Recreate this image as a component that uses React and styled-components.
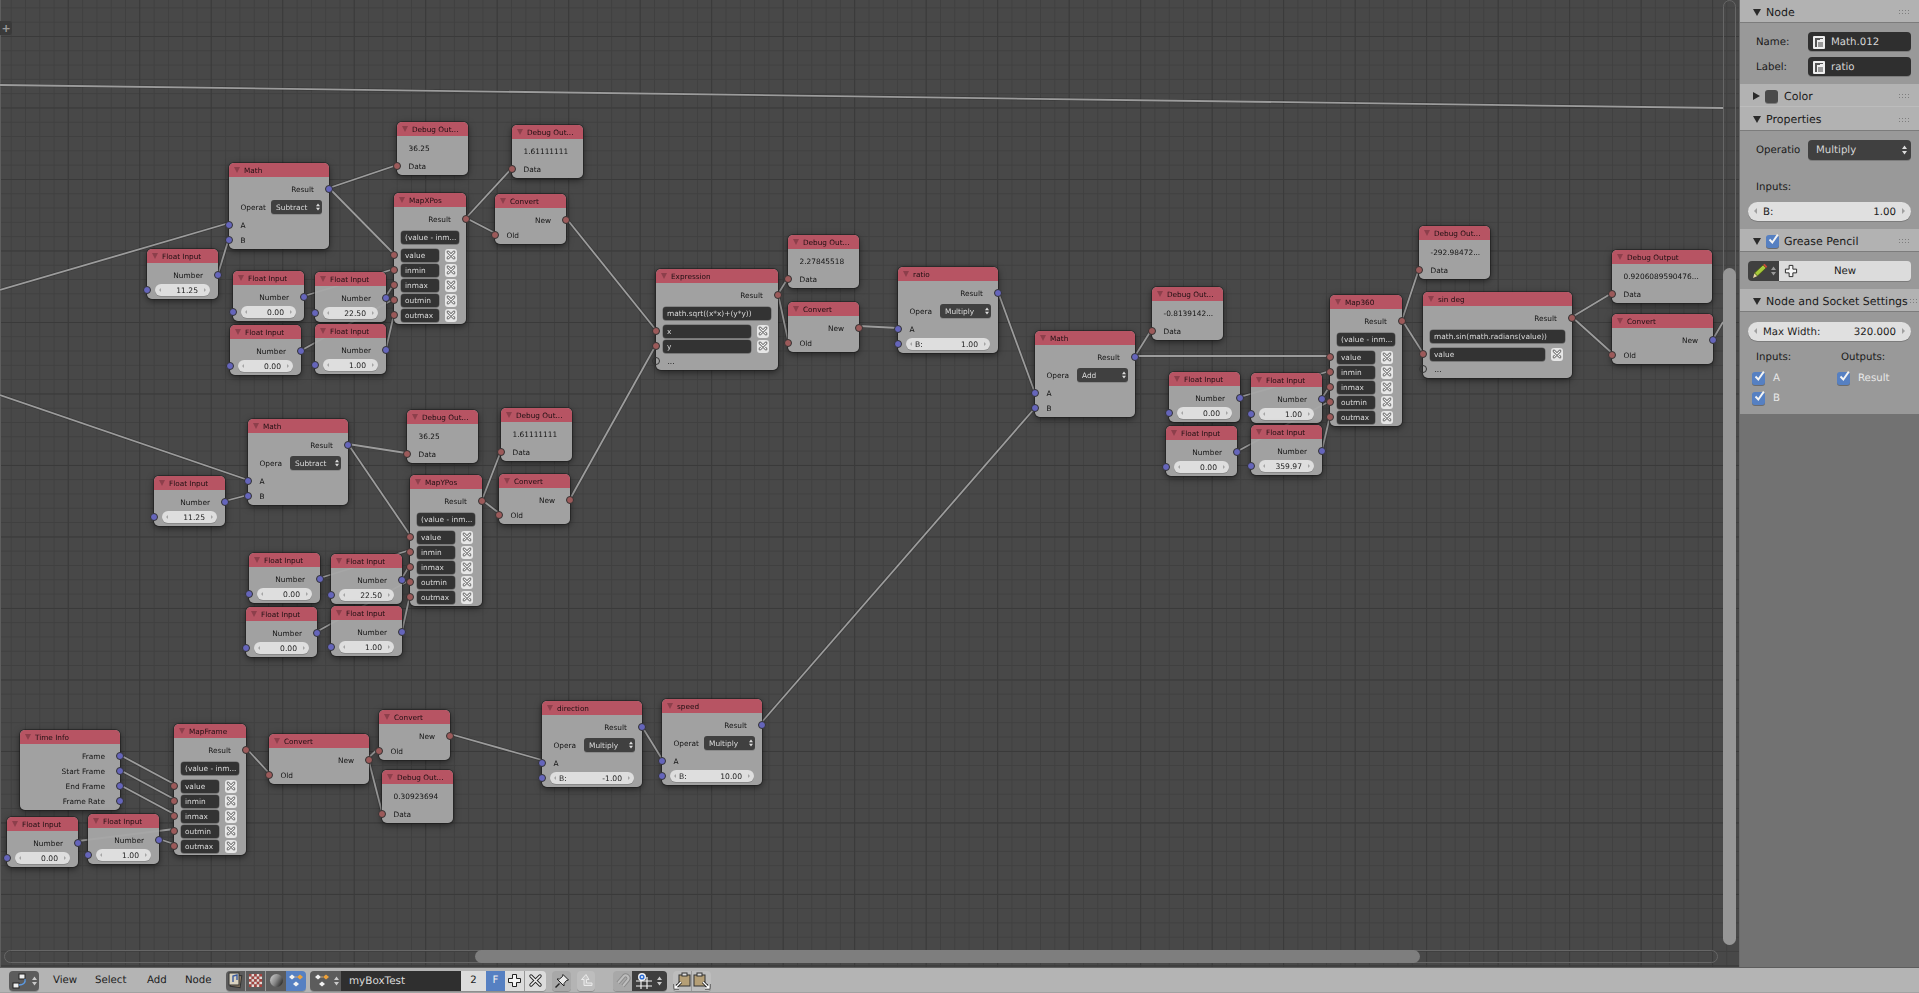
import styled, { createGlobalStyle } from "styled-components";

const GlobalStyle = createGlobalStyle`
  html, body {
    margin: 0;
    padding: 0;
    background: #727272;
    overflow: hidden;
  }
  * {
    box-sizing: border-box;
  }
`;

const WIRES = [
  [0, 85, 1723, 108],
  [0, 290, 229, 223],
  [0, 395, 248, 480],
  // first map group
  [229, 238, 218, 274],
  [329, 188, 397, 165],
  [329, 188, 394, 254],
  [304, 296, 394, 269],
  [386, 296, 394, 284],
  [302, 350, 394, 299],
  [386, 349, 394, 314],
  [466, 218, 512, 168],
  [466, 218, 495, 233],
  [566, 218, 656, 330],
  // second map group
  [225, 501, 248, 495],
  [348, 444, 406, 453],
  [348, 444, 410, 535],
  [320, 578, 410, 550],
  [402, 578, 410, 565],
  [318, 631, 410, 580],
  [402, 631, 410, 595],
  [482, 500, 501, 451],
  [482, 500, 499, 513],
  [570, 499, 656, 345],
  // middle
  [778, 294, 788, 278],
  [778, 294, 788, 340],
  [859, 326, 898, 328],
  [998, 292, 1035, 393],
  [1135, 356, 1152, 329],
  [1135, 356, 1330, 356],
  [1240, 397, 1330, 371],
  [1322, 398, 1330, 386],
  [1238, 451, 1330, 401],
  [1322, 450, 1330, 416],
  [761, 723, 1035, 408],
  [1402, 320, 1419, 269],
  [1402, 320, 1423, 353],
  [1572, 317, 1612, 293],
  [1572, 317, 1612, 353],
  [1713, 339, 1723, 322],
  // time group
  [120, 755, 174, 784],
  [120, 770, 174, 799],
  [120, 785, 174, 814],
  [78, 841, 174, 829],
  [159, 839, 174, 844],
  [246, 748, 269, 773],
  [368, 758, 379, 748],
  [368, 758, 382, 812],
  [450, 734, 542, 760],
  [641, 725, 662, 759],
];

const MAP_INPUTS = ["value", "inmin", "inmax", "outmin", "outmax"];

const NODES = [
  { type: "debug", x: 397, y: 122, value: "36.25" },
  { type: "debug", x: 512, y: 125, value: "1.61111111" },
  { type: "math", x: 229, y: 163, title: "Math", label: "Operat", op: "Subtract" },
  { type: "map", x: 394, y: 193, title: "MapXPos" },
  { type: "convert", x: 495, y: 194 },
  { type: "float", x: 147, y: 249, value: "11.25" },
  { type: "float", x: 233, y: 271, value: "0.00" },
  { type: "float", x: 315, y: 272, value: "22.50" },
  { type: "float", x: 230, y: 325, value: "0.00" },
  { type: "float", x: 315, y: 324, value: "1.00" },

  { type: "math", x: 248, y: 419, title: "Math", label: "Opera", op: "Subtract" },
  { type: "debug", x: 407, y: 410, value: "36.25" },
  { type: "debug", x: 501, y: 408, value: "1.61111111" },
  { type: "map", x: 410, y: 475, title: "MapYPos" },
  { type: "convert", x: 499, y: 474 },
  { type: "float", x: 154, y: 476, value: "11.25" },
  { type: "float", x: 249, y: 553, value: "0.00" },
  { type: "float", x: 331, y: 554, value: "22.50" },
  { type: "float", x: 246, y: 607, value: "0.00" },
  { type: "float", x: 331, y: 606, value: "1.00" },

  { type: "time", x: 20, y: 730 },
  { type: "map", x: 174, y: 724, title: "MapFrame" },
  { type: "convert", x: 269, y: 734, w: 100 },
  { type: "convert", x: 379, y: 710 },
  { type: "debug", x: 382, y: 770, value: "0.30923694" },
  { type: "float", x: 7, y: 817, value: "0.00" },
  { type: "float", x: 88, y: 814, value: "1.00" },
  { type: "math", x: 542, y: 701, title: "direction", label: "Opera", op: "Multiply", b: "-1.00" },
  { type: "math", x: 662, y: 699, title: "speed", label: "Operat", op: "Multiply", b: "10.00" },

  { type: "expr", x: 656, y: 269, w: 122, title: "Expression", expr: "math.sqrt((x*x)+(y*y))", inputs: ["x", "y"] },
  { type: "debug", x: 788, y: 235, value: "2.27845518" },
  { type: "convert", x: 788, y: 302 },
  { type: "math", x: 898, y: 267, title: "ratio", label: "Opera", op: "Multiply", b: "1.00" },
  { type: "math", x: 1035, y: 331, title: "Math", label: "Opera", op: "Add" },
  { type: "debug", x: 1152, y: 287, value: "-0.8139142..." },
  { type: "float", x: 1169, y: 372, value: "0.00" },
  { type: "float", x: 1251, y: 373, value: "1.00" },
  { type: "float", x: 1166, y: 426, value: "0.00" },
  { type: "float", x: 1251, y: 425, value: "359.97" },

  { type: "debug", x: 1419, y: 226, value: "-292.98472..." },
  { type: "map", x: 1330, y: 295, title: "Map360" },
  { type: "expr", x: 1423, y: 292, w: 149, title: "sin deg", expr: "math.sin(math.radians(value))", inputs: ["value"] },
  { type: "debug", x: 1612, y: 250, w: 100, title: "Debug Output", value: "0.9206089590476..." },
  { type: "convert", x: 1612, y: 314, w: 101 },
];

const Page = styled.div`
  display: flex;
  flex-direction: column;
  width: 1919px;
  height: 993px;
  font-family: "DejaVu Sans", sans-serif;
  text-rendering: geometricPrecision;
`;

const Main = styled.div`
  display: flex;
  height: 967px;
`;

const Canvas = styled.div`
  position: relative;
  width: 1740px;
  height: 967px;
  overflow: hidden;
  background-color: #484848;
  box-shadow: inset 1px 0 #5e5e5e, inset -1px 0 #6a6a6a;
  background-image:
    linear-gradient(to right, #3a3a3a 1px, transparent 1px),
    linear-gradient(to bottom, #3a3a3a 1px, transparent 1px),
    linear-gradient(to right, #404040 1px, transparent 1px),
    linear-gradient(to bottom, #404040 1px, transparent 1px);
  background-size: 71.5px 71.5px, 71.5px 71.5px, 14.3px 14.3px, 14.3px 14.3px;
  background-position: 67.7px 0, 0 36px, 10.7px 0, 0 7.4px;
`;

const WireLayer = styled.svg`
  position: absolute;
  inset: 0;
  filter: blur(0.3px);
`;

const AddTab = styled.div`
  position: absolute;
  left: 0;
  top: 21px;
  width: 12px;
  height: 14px;
  display: flex;
  align-items: center;
  justify-content: center;
  background: #3a3a3a;
  border-radius: 0 3px 3px 0;
  color: #9a9a9a;
  font-size: 11px;
  font-weight: bold;
`;

const ScrollTrackX = styled.div`
  position: absolute;
  left: 4px;
  top: 950px;
  width: 1714px;
  height: 13px;
  border: 1px solid #666;
  border-radius: 7px;
`;

const ScrollThumbX = styled.div`
  position: absolute;
  left: 475px;
  top: 950px;
  width: 945px;
  height: 13px;
  background: #7e7e7e;
  border-radius: 7px;
`;

const ScrollTrackY = styled.div`
  position: absolute;
  left: 1723px;
  top: 0;
  width: 13px;
  height: 945px;
  border: 1px solid #666;
  border-radius: 7px;
`;

const ScrollThumbY = styled.div`
  position: absolute;
  left: 1723px;
  top: 268px;
  width: 13px;
  height: 677px;
  background: #969696;
  border-radius: 7px;
`;

/* nodes */

const NodeBox = styled.div`
  position: absolute;
  left: ${(p) => p.$x}px;
  top: ${(p) => p.$y}px;
  width: ${(p) => p.$w}px;
  display: flex;
  flex-direction: column;
  padding-bottom: 1.5px;
  background: rgba(166, 166, 166, 0.95);
  border-radius: 5px;
  box-shadow: 0 0 0 1px rgba(28, 28, 28, 0.55), 0 2px 7px rgba(0, 0, 0, 0.55);
  font-size: 7.4px;
  color: #141414;
  filter: blur(0.35px);
`;

const NodeHeader = styled.div`
  display: flex;
  align-items: center;
  gap: 4px;
  height: 14px;
  padding-left: 5px;
  margin-bottom: 4.5px;
  background: rgba(184, 80, 96, 0.95);
  border-radius: 5px 5px 0 0;
  color: #1f0f12;
  font-size: 7.3px;
  white-space: nowrap;
`;

const HeaderArrow = styled.span`
  width: 0;
  height: 0;
  border-left: 3px solid transparent;
  border-right: 3px solid transparent;
  border-top: 6px solid #8d3f4b;
`;

const Row = styled.div`
  position: relative;
  display: flex;
  align-items: center;
  height: 15px;
  margin-top: ${(p) => (p.$spaced ? 3 : 0)}px;
  padding: 0 ${(p) => (p.$right ? 15 : 7)}px 0 ${(p) => (p.$text ? 11.5 : 7)}px;
  justify-content: ${(p) => (p.$right ? "flex-end" : "flex-start")};
  white-space: nowrap;
`;

const Socket = styled.span`
  position: absolute;
  top: 50%;
  ${(p) => (p.$side === "out" ? "right: -4px" : "left: -4px")};
  width: 8px;
  height: 8px;
  margin-top: -4px;
  border-radius: 50%;
  border: 1px solid #333;
  background: ${(p) =>
    p.$kind === "float" ? "#6565bb" : p.$kind === "any" ? "#9c5a5a" : "transparent"};
`;

const FloatField = styled.div`
  position: relative;
  flex: 1;
  display: flex;
  justify-content: space-between;
  align-items: center;
  height: 12px;
  padding: 0 12px 0 9px;
  margin: 0 1px;
  background: #dedede;
  border-radius: 6px;
  box-shadow: 0 1px 0 #8a8a8a;
  color: #1c1c1c;
  font-size: 7.6px;

  &:before,
  &:after {
    content: "";
    position: absolute;
    top: 4px;
    border-top: 2px solid transparent;
    border-bottom: 2px solid transparent;
  }
  &:before {
    left: 4px;
    border-right: 2px solid #a5a5a5;
  }
  &:after {
    right: 4px;
    border-left: 2px solid #a5a5a5;
  }
`;

const ValueSpacer = styled.span`
  flex: 1;
`;

const Dropdown = styled.div`
  position: relative;
  display: flex;
  align-items: center;
  width: 51px;
  height: 14px;
  padding-left: 5px;
  margin-left: auto;
  background: #404040;
  border-radius: 3px;
  box-shadow: 0 1px 0 #8a8a8a;
  color: #dcdcdc;
  font-size: 7.4px;
`;

const UpDown = styled.svg`
  position: absolute;
  right: ${(p) => p.$r ?? 2}px;
  top: 50%;
  transform: translateY(-50%);
`;

const DarkField = styled.div`
  flex: 1;
  display: flex;
  align-items: center;
  height: 13px;
  padding-left: 4px;
  min-width: 0;
  overflow: hidden;
  background: #333;
  border-radius: 3px;
  box-shadow: 0 0 0 0.5px #666, 0 1px 0 #8a8a8a;
  color: #dadada;
  font-size: 7.4px;
  white-space: nowrap;
`;

const LinkButton = styled.div`
  display: flex;
  align-items: center;
  justify-content: center;
  flex-shrink: 0;
  width: 12px;
  height: 13px;
  margin-left: 6px;
  margin-right: 2px;
  background: #e6e6e6;
  border-radius: 3px;
`;

function UnlinkIcon() {
  return (
    <svg width="10" height="10" viewBox="0 0 10 10" fill="none" strokeLinecap="round">
      <path d="M2 2 8 8M8 2 2 8" stroke="#444" strokeWidth="2.6" />
      <path d="M2 2 8 8M8 2 2 8" stroke="#f2f2f2" strokeWidth="1.3" />
    </svg>
  );
}

function Arrows({ color = "#dcdcdc", right = 2, size = 8, width = 4 }) {
  return (
    <UpDown $r={right} width={width} height={size} viewBox="0 0 5 9" fill={color}>
      <path d="M2.5 0 5 3.6H0zM2.5 9 0 5.4h5z" />
    </UpDown>
  );
}

function Node({ x, y, w = 71, title, children }) {
  return (
    <NodeBox $x={x} $y={y} $w={w}>
      <NodeHeader>
        <HeaderArrow />
        {title}
      </NodeHeader>
      {children}
    </NodeBox>
  );
}

function MathBody({ label, op, b }) {
  return (
    <>
      <Row $right>
        Result
        <Socket $side="out" $kind="float" />
      </Row>
      <Row $spaced $text>
        {label}
        <Dropdown>
          {op}
          <Arrows />
        </Dropdown>
      </Row>
      <Row $spaced $text>
        <Socket $kind="float" />A
      </Row>
      {b ? (
        <Row>
          <Socket $kind="float" />
          <FloatField>
            B:
            <span>{b}</span>
          </FloatField>
        </Row>
      ) : (
        <Row $text>
          <Socket $kind="float" />B
        </Row>
      )}
    </>
  );
}

function NodeView({ node }) {
  const { type, x, y, w, title, value } = node;
  if (type === "float") {
    return (
      <Node x={x} y={y} title="Float Input">
        <Row $right>
          Number
          <Socket $side="out" $kind="float" />
        </Row>
        <Row>
          <Socket $kind="float" />
          <FloatField>
            <ValueSpacer />
            {value}
          </FloatField>
        </Row>
      </Node>
    );
  }
  if (type === "debug") {
    return (
      <Node x={x} y={y} w={w} title={title || "Debug Out..."}>
        <Row $text>{value}</Row>
        <Row $spaced $text>
          <Socket $kind="any" />
          Data
        </Row>
      </Node>
    );
  }
  if (type === "convert") {
    return (
      <Node x={x} y={y} w={w} title="Convert">
        <Row $right>
          New
          <Socket $side="out" $kind={w === 101 ? "float" : "any"} />
        </Row>
        <Row $text>
          <Socket $kind="any" />
          Old
        </Row>
      </Node>
    );
  }
  if (type === "math") {
    return (
      <Node x={x} y={y} w={100} title={title}>
        <MathBody label={node.label} op={node.op} b={node.b} />
      </Node>
    );
  }
  if (type === "map") {
    return (
      <Node x={x} y={y} w={72} title={title}>
        <Row $right>
          Result
          <Socket $side="out" $kind="any" />
        </Row>
        <Row $spaced>
          <DarkField>(value - inm...</DarkField>
        </Row>
        {MAP_INPUTS.map((name, i) => (
          <Row key={name} $spaced={i === 0}>
            <Socket $kind="any" />
            <DarkField>{name}</DarkField>
            <LinkButton>
              <UnlinkIcon />
            </LinkButton>
          </Row>
        ))}
      </Node>
    );
  }
  if (type === "expr") {
    return (
      <Node x={x} y={y} w={w} title={title}>
        <Row $right>
          Result
          <Socket $side="out" $kind="any" />
        </Row>
        <Row $spaced>
          <DarkField>{node.expr}</DarkField>
        </Row>
        {node.inputs.map((name, i) => (
          <Row key={name} $spaced={i === 0}>
            <Socket $kind="any" />
            <DarkField>{name}</DarkField>
            <LinkButton>
              <UnlinkIcon />
            </LinkButton>
          </Row>
        ))}
        <Row $text>
          <Socket />
          ...
        </Row>
      </Node>
    );
  }
  return (
    <Node x={x} y={y} w={100} title="Time Info">
      {["Frame", "Start Frame", "End Frame", "Frame Rate"].map((name) => (
        <Row key={name} $right>
          {name}
          <Socket $side="out" $kind="float" />
        </Row>
      ))}
    </Node>
  );
}

/* side panel */

const Panel = styled.aside`
  width: 179px;
  height: 967px;
  background: #727272;
  color: #1a1a1a;
  font-size: 10.2px;
`;

const PanelHeader = styled.div`
  display: flex;
  align-items: center;
  height: ${(p) => p.$h}px;
  padding: 2px 11px 0 11px;
  background: #b2b2b2;
  border-bottom: 1px solid ${(p) => (p.$flat ? "#bcbcbc" : "#7c7c7c")};
  font-size: 11px;
  white-space: nowrap;
`;

const Disclosure = styled.span`
  width: 0;
  height: 0;
  flex-shrink: 0;
  margin-left: 2px;
  margin-right: 5px;
  ${(p) =>
    p.$open
      ? `border-left: 4px solid transparent; border-right: 4px solid transparent; border-top: 7px solid #2a2a2a;`
      : `border-top: 4px solid transparent; border-bottom: 4px solid transparent; border-left: 7px solid #2a2a2a;`}
`;

const Grip = styled.span`
  margin-left: auto;
  position: relative;
  left: 1px;
  flex-shrink: 0;
  width: 11px;
  height: 6px;
  margin-right: ${(p) => (p.$overlap ? -4 : 0)}px;
  background-image: radial-gradient(circle, #7e7e7e 0.8px, transparent 1px);
  background-size: 3px 3px;
`;

const Swatch = styled.span`
  width: 13px;
  height: 13px;
  margin-right: 6px;
  background: #4a4a4a;
  border-radius: 3px;
  box-shadow: 0 1px 0 #7c7c7c;
`;

const PanelBody = styled.div`
  display: flex;
  flex-direction: column;
  height: ${(p) => p.$h}px;
  padding: ${(p) => p.$top ?? 9}px 8px 0 8px;
  background: #999;
`;

const FieldRow = styled.div`
  display: flex;
  align-items: center;
  height: ${(p) => p.$h ?? 19}px;
  margin-top: ${(p) => p.$mt ?? 0}px;
  padding-left: 8px;
`;

const FieldLabel = styled.span`
  width: 52px;
  padding-top: 1px;
`;

const NameField = styled.div`
  display: flex;
  align-items: center;
  gap: 6px;
  width: 103px;
  height: 100%;
  padding: 1px 0 0 5px;
  background: #2f2f2f;
  border-radius: 4px;
  box-shadow: 0 1px 0 #7c7c7c;
  color: #d6d6d6;
`;

const Select = styled(NameField)`
  position: relative;
  padding-left: 8px;
  background: #404040;
`;

const SmallHeading = styled.div`
  height: 14px;
  margin-top: 20px;
  padding: 2px 0 0 8px;
`;

const NumberField = styled.div`
  position: relative;
  display: flex;
  align-items: center;
  justify-content: space-between;
  height: 19px;
  margin-top: ${(p) => p.$mt ?? 0}px;
  padding: 1px 15px 0;
  background: #e0e0e0;
  border-radius: 10px;
  box-shadow: 0 1px 0 #7c7c7c;
  color: #222;

  &:before,
  &:after {
    content: "";
    position: absolute;
    top: 6px;
    border-top: 3.5px solid transparent;
    border-bottom: 3.5px solid transparent;
  }
  &:before {
    left: 6px;
    border-right: 3.5px solid #a0a0a0;
  }
  &:after {
    right: 6px;
    border-left: 3.5px solid #a0a0a0;
  }
`;

const PencilRow = styled.div`
  display: flex;
  height: 20px;
`;

const PencilPicker = styled.div`
  position: relative;
  display: flex;
  align-items: center;
  width: 31px;
  padding-left: 4px;
  background: #404040;
  border-radius: 4px 0 0 4px;
`;

const NewButton = styled.div`
  position: relative;
  flex: 1;
  display: flex;
  align-items: center;
  justify-content: center;
  padding-top: 1px;
  background: #dcdcdc;
  border-radius: 0 4px 4px 0;
  box-shadow: 0 1px 0 #7c7c7c;
  color: #1c1c1c;
`;

const NewPlus = styled.div`
  position: absolute;
  left: 5px;
  top: 3px;
  display: flex;
`;

const SocketLists = styled.div`
  display: grid;
  grid-template-columns: 85px 1fr;
  margin-top: 10px;
`;

const SocketColumn = styled.div`
  display: flex;
  flex-direction: column;
  gap: 6px;
`;

const ColumnTitle = styled.div`
  height: 13px;
  margin-bottom: 1px;
  padding: 1px 0 0 8px;
`;

const CheckRow = styled.div`
  display: flex;
  align-items: center;
  gap: 8px;
  height: 14px;
  padding-left: 4px;
  color: #e8e8e8;
`;

const CheckBox = styled.span`
  position: relative;
  flex-shrink: 0;
  width: 13px;
  height: 13px;
  margin-right: ${(p) => p.$mr ?? 0}px;
  background: #5680c2;
  border-radius: 3px;
  box-shadow: 0 1px 0 #6c6c6c;
`;

const CheckMark = styled.svg`
  position: absolute;
  left: 1px;
  top: -2px;
`;

function Check({ mr }) {
  return (
    <CheckBox $mr={mr}>
      <CheckMark width="13" height="13" viewBox="0 0 13 13" fill="none">
        <path d="M2.5 6.5 5.3 9.5 10.8 1.6" stroke="#f4f4f4" strokeWidth="1.9" />
      </CheckMark>
    </CheckBox>
  );
}

function NodeIdIcon() {
  return (
    <svg width="12" height="13" viewBox="0 0 12 13">
      <rect width="12" height="13" rx="1" fill="#eee" />
      <path d="M2 2h8v2H4v7H2z" fill="#555" />
      <rect x="5" y="6" width="5" height="5" fill="#999" />
      <rect x="7" y="3" width="3" height="1" fill="#eee" />
    </svg>
  );
}

/* bottom toolbar */

const Toolbar = styled.footer`
  display: flex;
  align-items: center;
  height: 26px;
  padding: 1px 0 0 9px;
  background: #b4b4b4;
  border-top: 1px solid #5d5d5d;
  border-bottom: 1px solid #a2a2a2;
  color: #1c1c1c;
  font-size: 10.2px;
`;

const MenuBar = styled.nav`
  display: flex;
  margin-left: 14px;
`;

const MenuItem = styled.span`
  width: ${(p) => p.$w}px;
`;

const ToolGroup = styled.div`
  display: flex;
  height: 20px;
  margin-left: ${(p) => p.$ml ?? 0}px;
  border-radius: 4px;
  overflow: hidden;
  box-shadow: 0 1px 0 #8e8e8e;
`;

const ToolButton = styled.div`
  position: relative;
  display: flex;
  align-items: center;
  justify-content: ${(p) => (p.$start ? "flex-start" : "center")};
  width: ${(p) => p.$w ?? 20}px;
  padding-left: ${(p) => (p.$start ? 3 : 0)}px;
  background: ${(p) => p.$bg ?? "#bdbdbd"};
  color: ${(p) => p.$color ?? "#1c1c1c"};
  border-right: ${(p) => (p.$sep ? "1px solid #999" : "none")};
`;

const DataName = styled.div`
  display: flex;
  align-items: center;
  width: 120px;
  padding-left: 8px;
  background: #2f2f2f;
  color: #dcdcdc;
  font-size: 10.4px;
`;

function EditorIcon() {
  return (
    <svg width="16" height="16" viewBox="0 0 16 16" fill="none">
      <rect x="7" y="1" width="6" height="5" fill="#eee" stroke="#222" />
      <rect x="1" y="10" width="6" height="5" fill="#eee" stroke="#222" />
      <path d="M13 6c1 4-2 6-6 6" stroke="#5b9be6" strokeWidth="1.3" />
    </svg>
  );
}

function DiamondsIcon() {
  return (
    <svg width="18" height="17" viewBox="0 0 18 17">
      <path d="M2 5 5 2.5 8 5 5 7.5z" fill="#f2f2f2" />
      <path d="M10 5 13 2.5 16 5 13 7.5z" fill="#eda13a" />
      <path d="M6 12 9 9.5 12 12 9 14.5z" fill="#f2f2f2" />
      <path d="M8 5h2" stroke="#c9a67a" />
    </svg>
  );
}

function NoteIcon() {
  return (
    <svg width="17" height="17" viewBox="0 0 17 17">
      <rect x="4" y="3" width="10" height="12" fill="#8a7a63" stroke="#333" transform="rotate(8 9 9)" />
      <rect x="2" y="1" width="10" height="12" fill="#d9d2c0" stroke="#333" />
      <path d="M6 10V4l4-1v5" fill="none" stroke="#3a5a9e" strokeWidth="1.4" />
    </svg>
  );
}

function CheckerIcon() {
  const cells = [];
  for (let r = 0; r < 5; r++) {
    for (let c = 0; c < 5; c++) {
      cells.push(
        <rect key={`${r}-${c}`} x={2 + c * 2.6} y={2 + r * 2.6} width="2.6" height="2.6" fill={(r + c) % 2 ? "#e6d8d4" : "#a6413c"} />
      );
    }
  }
  return <svg width="17" height="17" viewBox="0 0 17 17">{cells}</svg>;
}

function SphereIcon() {
  return (
    <svg width="17" height="17" viewBox="0 0 17 17">
      <defs>
        <linearGradient id="ball" x1="0" y1="0" x2="1" y2="0.6">
          <stop offset="0" stopColor="#d4d4d4" />
          <stop offset="0.55" stopColor="#8a8a8a" />
          <stop offset="1" stopColor="#333" />
        </linearGradient>
      </defs>
      <circle cx="8.5" cy="8.5" r="6.5" fill="url(#ball)" />
    </svg>
  );
}

function PinIcon() {
  return (
    <svg width="16" height="16" viewBox="0 0 16 16" fill="#e8e8e8" stroke="#222" strokeWidth="1">
      <path d="M9 1.5 14.5 7 12.5 7.5 10 10.5 10 13 3 6 5.5 6 8.5 3.5z" />
      <path d="M5.5 10.5 1.5 14.5" strokeWidth="1.5" />
    </svg>
  );
}

function ParentIcon() {
  return (
    <svg width="15" height="15" viewBox="0 0 15 15" fill="none">
      <path d="M7 1.5 2.5 6.5H5V12.5H13V10H7.5V6.5H10z" fill="#c8c8c8" stroke="#eaeaea" />
    </svg>
  );
}

function MagnetIcon() {
  return (
    <svg width="16" height="16" viewBox="0 0 16 16" fill="none">
      <path d="M3 10 9 3c2-2 6 1 4 4l-5 6" stroke="#8a8a8a" strokeWidth="4" />
      <path d="M3 10 9 3c2-2 6 1 4 4l-5 6" stroke="#bdbdbd" strokeWidth="2" />
    </svg>
  );
}

function SnapIcon() {
  return (
    <svg width="18" height="18" viewBox="0 0 18 18" fill="none">
      <path d="M6 5v12M12 5v12M1 9h16M1 14h16" stroke="#f2f2f2" strokeWidth="1.2" />
      <circle cx="7" cy="5" r="4" fill="#f2f2f2" />
      <circle cx="7" cy="5" r="2.6" fill="#2f6fd6" />
      <circle cx="7" cy="5" r="1" fill="#fff" />
    </svg>
  );
}

function ClipIcon({ flip }) {
  const arrow = flip ? "M10 10 16 16M16 12V16H12" : "M8 10 2 16M2 12V16H6";
  return (
    <svg width="18" height="18" viewBox="0 0 18 18">
      <rect x={flip ? 1 : 6} y="3" width="11" height="11" fill="#b59f76" stroke="#333" />
      <rect x={flip ? 4 : 9} y="1" width="5" height="3" fill="#ddd" stroke="#333" />
      <path d={arrow} fill="none" stroke="#222" strokeWidth="3" />
      <path d={arrow} fill="none" stroke="#fff" strokeWidth="1.4" />
    </svg>
  );
}

function PlusIcon({ size = 15 }) {
  return (
    <svg width={size} height={size} viewBox="0 0 15 15" fill="#f4f4f4" stroke="#222">
      <path d="M5.5 1.5h4v4h4v4h-4v4h-4v-4h-4v-4h4z" />
    </svg>
  );
}

function CrossIcon() {
  return (
    <svg width="15" height="15" viewBox="0 0 15 15" fill="none" strokeLinecap="round">
      <path d="M3 3 12 12M12 3 3 12" stroke="#222" strokeWidth="3.4" />
      <path d="M3 3 12 12M12 3 3 12" stroke="#f0f0f0" strokeWidth="1.6" />
    </svg>
  );
}

function PencilIcon() {
  return (
    <svg width="16" height="16" viewBox="0 0 16 16">
      <path d="M1 15 2.5 10 5.5 13z" fill="#e8d5a0" />
      <path d="M2.5 10 11 2 14 5 5.5 13z" fill="#a6c93a" stroke="#3f4f12" strokeWidth=".7" />
      <path d="M11 2 12.5 .8 15.2 3.5 14 5z" fill="#c94a3a" />
    </svg>
  );
}

export default function App() {
  return (
    <Page>
      <GlobalStyle />
      <Main>
        <Canvas>
          <WireLayer width="1740" height="967">
            {WIRES.map(([x1, y1, x2, y2], i) => (
              <g key={i}>
                <line x1={x1} y1={y1} x2={x2} y2={y2} stroke="rgba(20,20,20,.25)" strokeWidth="3.2" />
                <line x1={x1} y1={y1} x2={x2} y2={y2} stroke="#9c9c9c" strokeWidth="1.8" />
              </g>
            ))}
          </WireLayer>
          <AddTab>+</AddTab>
          {NODES.map((node, i) => (
            <NodeView key={i} node={node} />
          ))}
          <ScrollTrackX />
          <ScrollThumbX />
          <ScrollTrackY />
          <ScrollThumbY />
        </Canvas>

        <Panel>
          <PanelHeader $h={23}>
            <Disclosure $open />
            Node
            <Grip />
          </PanelHeader>
          <PanelBody $h={61} $top={9}>
            <FieldRow>
              <FieldLabel>Name:</FieldLabel>
              <NameField>
                <NodeIdIcon />
                Math.012
              </NameField>
            </FieldRow>
            <FieldRow $mt={6}>
              <FieldLabel>Label:</FieldLabel>
              <NameField>
                <NodeIdIcon />
                ratio
              </NameField>
            </FieldRow>
          </PanelBody>

          <PanelHeader $h={23} $flat>
            <Disclosure />
            <Swatch />
            Color
            <Grip />
          </PanelHeader>
          <PanelHeader $h={24}>
            <Disclosure $open />
            Properties
            <Grip />
          </PanelHeader>
          <PanelBody $h={98} $top={9}>
            <FieldRow $h={20}>
              <FieldLabel>Operatio</FieldLabel>
              <Select>
                Multiply
                <Arrows right={4} size={13} width={5} />
              </Select>
            </FieldRow>
            <SmallHeading>Inputs:</SmallHeading>
            <NumberField $mt={8}>
              <span>B:</span>
              <span>1.00</span>
            </NumberField>
          </PanelBody>

          <PanelHeader $h={23}>
            <Disclosure $open />
            <Check mr={5} />
            Grease Pencil
            <Grip />
          </PanelHeader>
          <PanelBody $h={37} $top={9}>
            <PencilRow>
              <PencilPicker>
                <PencilIcon />
                <Arrows color="#9a9a9a" right={3} size={13} width={5} />
              </PencilPicker>
              <NewButton>
                <NewPlus>
                  <PlusIcon size={14} />
                </NewPlus>
                New
              </NewButton>
            </PencilRow>
          </PanelBody>

          <PanelHeader $h={23}>
            <Disclosure $open />
            Node and Socket Settings
            <Grip $overlap />
          </PanelHeader>
          <PanelBody $h={102} $top={10}>
            <NumberField>
              <span>Max Width:</span>
              <span>320.000</span>
            </NumberField>
            <SocketLists>
              <SocketColumn>
                <ColumnTitle>Inputs:</ColumnTitle>
                <CheckRow>
                  <Check />A
                </CheckRow>
                <CheckRow>
                  <Check />B
                </CheckRow>
              </SocketColumn>
              <SocketColumn>
                <ColumnTitle>Outputs:</ColumnTitle>
                <CheckRow>
                  <Check />
                  Result
                </CheckRow>
              </SocketColumn>
            </SocketLists>
          </PanelBody>
        </Panel>
      </Main>

      <Toolbar>
        <ToolGroup>
          <ToolButton $w={30} $bg="#5c5c5c" $start>
            <EditorIcon />
            <Arrows color="#c9c9c9" right={2} size={12} width={5} />
          </ToolButton>
        </ToolGroup>
        <MenuBar>
          <MenuItem $w={42}>View</MenuItem>
          <MenuItem $w={52}>Select</MenuItem>
          <MenuItem $w={38}>Add</MenuItem>
          <MenuItem $w={41}>Node</MenuItem>
        </MenuBar>
        <ToolGroup>
          <ToolButton $bg="#5c5c5c" $sep>
            <NoteIcon />
          </ToolButton>
          <ToolButton $bg="#5c5c5c" $sep>
            <CheckerIcon />
          </ToolButton>
          <ToolButton $bg="#5c5c5c">
            <SphereIcon />
          </ToolButton>
          <ToolButton $bg="#5680c2">
            <DiamondsIcon />
          </ToolButton>
        </ToolGroup>
        <ToolGroup $ml={4}>
          <ToolButton $w={31} $bg="#5c5c5c" $start>
            <DiamondsIcon />
            <Arrows color="#c9c9c9" right={2} size={12} width={5} />
          </ToolButton>
          <DataName>myBoxTest</DataName>
          <ToolButton $w={25} $bg="#dcdcdc">2</ToolButton>
          <ToolButton $w={19} $bg="#5680c2" $color="#eee">F</ToolButton>
          <ToolButton $bg="#dcdcdc" $sep>
            <PlusIcon />
          </ToolButton>
          <ToolButton $w={21} $bg="#dcdcdc">
            <CrossIcon />
          </ToolButton>
        </ToolGroup>
        <ToolGroup $ml={6}>
          <ToolButton $w={19} $bg="#a8a8a8">
            <PinIcon />
          </ToolButton>
        </ToolGroup>
        <ToolGroup $ml={6}>
          <ToolButton $w={18}>
            <ParentIcon />
          </ToolButton>
        </ToolGroup>
        <ToolGroup $ml={18}>
          <ToolButton $w={19} $bg="#a8a8a8">
            <MagnetIcon />
          </ToolButton>
          <ToolButton $w={35} $bg="#3e3e3e" $start>
            <SnapIcon />
            <Arrows color="#c9c9c9" right={5} size={12} width={5} />
          </ToolButton>
        </ToolGroup>
        <ToolGroup $ml={6}>
          <ToolButton $w={19} $sep>
            <ClipIcon />
          </ToolButton>
          <ToolButton $w={19}>
            <ClipIcon flip />
          </ToolButton>
        </ToolGroup>
      </Toolbar>
    </Page>
  );
}
